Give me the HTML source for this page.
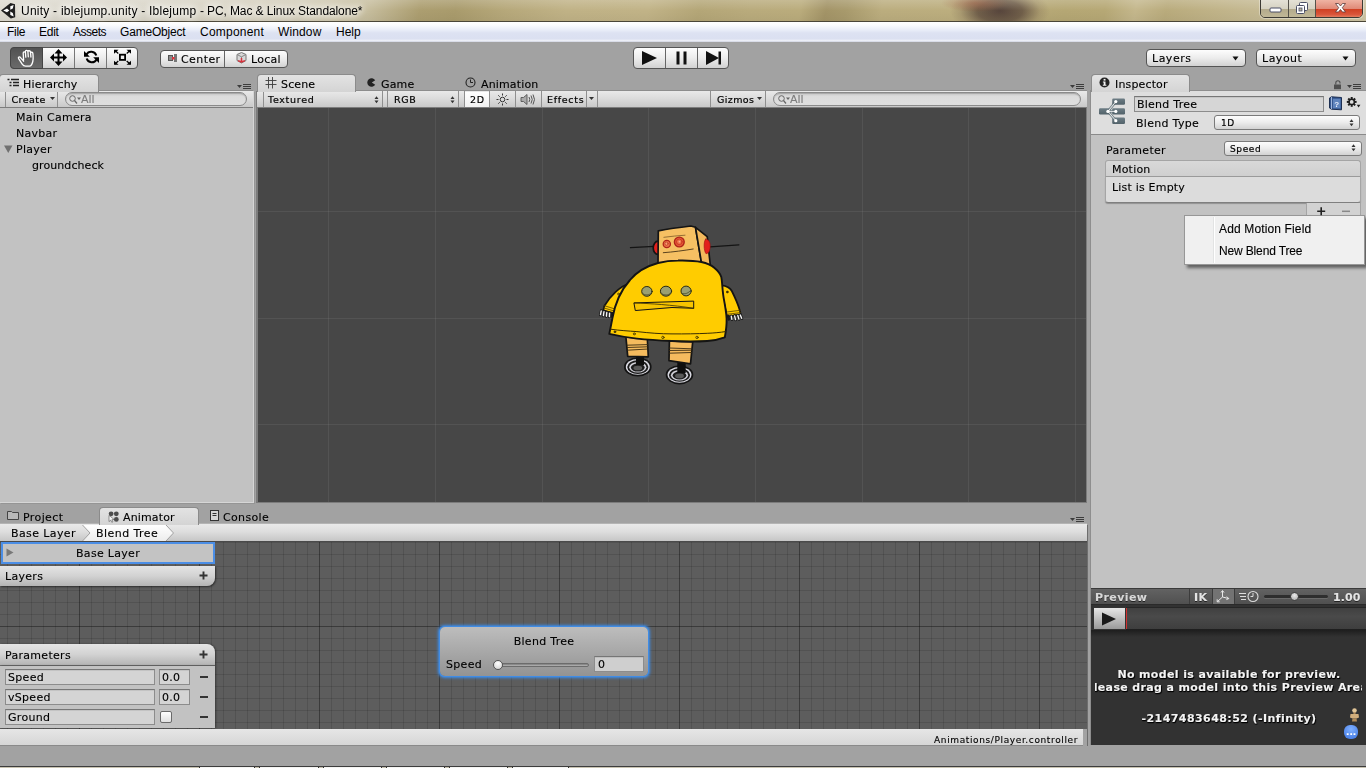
<!DOCTYPE html>
<html>
<head>
<meta charset="utf-8">
<title>Unity - iblejump.unity</title>
<style>
*{box-sizing:border-box;margin:0;padding:0}
html,body{width:1366px;height:768px;overflow:hidden}
body{background:#a2a2a2;font-family:"DejaVu Sans","Liberation Sans",sans-serif;font-size:11px;color:#000;position:relative}
.abs{position:absolute}
.t{position:absolute;white-space:nowrap;line-height:14px;margin-top:1px;z-index:4}
/* title bar */
#title{left:0;top:0;width:1366px;height:22px;border-bottom:1px solid #4a4638;background:
radial-gradient(ellipse 34px 9px at 975px 3px,rgba(150,80,50,.6),rgba(150,90,60,0) 100%),
radial-gradient(ellipse 50px 24px at 1000px 11px,rgba(84,66,58,.97),rgba(100,82,66,.85) 45%,rgba(140,122,92,.35) 80%,rgba(160,145,105,0) 100%),
linear-gradient(100deg,#dddad0 0px,#d9d5c8 150px,#d2ccb8 290px,#c6bd9d 365px,#ac9e70 415px,#a99b6c 450px,#b6a87a 500px,#c0b286 560px,#c1b387 640px,#b4a677 690px,#b9ab7c 740px,#baac7c 790px,#a39467 815px,#a89a6c 835px,#bbad7e 870px,#bcae7e 950px,#b5a774 1050px,#b6a875 1090px,#c4b78c 1120px,#b9ab7c 1150px,#c0b388 1200px,#c9bf9c 1280px,#cfc6a6 1366px)}
#title .tt{left:21px;top:3px;font:12px "Liberation Sans",sans-serif;letter-spacing:.08px;color:#000;line-height:15px;text-shadow:0 0 6px #fff,0 0 8px #fff,0 0 10px rgba(255,255,255,.9)}
#menu{left:0;top:22px;width:1366px;height:20px;background:linear-gradient(#ffffff 0,#fbfcfe 15%,#e9edf8 40%,#dde2f2 55%,#dbe0f1 85%,#eef0f8 92%,#cfd3e0 100%)}
#menu span{position:absolute;top:3px;font:12px "Liberation Sans",sans-serif;line-height:15px}
/* generic unity */
.panelbg{background:#c2c2c2}
.tab{position:absolute;height:18px;z-index:2;background:linear-gradient(#e3e3e3,#d4d4d4);border:1px solid #8b8b8b;border-bottom:none;border-radius:4px 4px 0 0}
.tbar{position:absolute;height:17px;background:linear-gradient(#e9e9e9 0,#dcdcdc 45%,#c9c9c9 100%);border-top:1px solid #8d8d8d;border-bottom:1px solid #7d7d7d}
.btn{position:absolute;background:linear-gradient(#fdfdfd 0,#ececec 50%,#d2d2d2 100%);border:1px solid #555;border-radius:4px}

.itab{z-index:3;position:absolute;top:78px;font-size:11px;line-height:14px;white-space:nowrap;letter-spacing:.15px}
.dd{position:absolute;top:0;height:15px;border-left:1px solid #8a8a8a;border-right:1px solid #f2f2f2}
.sep{position:absolute;top:-1px;width:1px;height:16px;background:#8f8f8f}
.search{position:absolute;height:14px;border:1px solid #8a8a8a;border-radius:7px;background:linear-gradient(#c9c9c9,#dcdcdc 30%,#dedede);box-shadow:inset 0 1px 1px rgba(0,0,0,.18)}
.pmenu{position:absolute;width:14px;height:7px}
.fld{position:absolute;background:#d4d4d4;border:1px solid #8c8c8c;border-top-color:#767676;box-shadow:inset 0 1px 0 rgba(0,0,0,.08)}
svg.abs{z-index:3}
</style>
</head>
<body>
<!-- TITLE BAR -->
<div id="title" class="abs">
  <div class="abs" style="left:0;top:0;width:1366px;height:21px;background:linear-gradient(rgba(255,255,255,.18),rgba(255,255,255,0) 50%,rgba(0,0,0,.04))"></div>
  <svg class="abs" style="left:0;top:2px" width="17" height="18" viewBox="0 0 17 18">
    <path d="M1 8.500 L10.500 1 L15 2.200 L15.200 15.300 L10.800 16.500 Z" fill="#1e1e1e"/>
    <path d="M3.200 8.500 L7 6.600 L9.300 8.500 L7 10.300 Z M10.300 7.800 L10.300 4.300 L13.600 3 L12.800 6.500 Z M10.300 9.600 L12.800 11 L13.700 14.600 L10.300 13 Z" fill="#fff"/>
  </svg>
  <div class="t tt"><span style="letter-spacing:.24px">Unity - iblejump.unity - Iblejump </span><span style="letter-spacing:-.1px">- PC, Mac &amp; Linux Standalone*</span></div>
  <!-- window buttons -->
  <div class="abs" style="left:1260px;top:-1px;width:103px;height:19px;border:1px solid #3c3a34;border-radius:0 0 5px 5px;overflow:hidden;box-shadow:0 0 0 1px rgba(255,255,255,.35)">
    <div class="abs" style="left:0;top:0;width:28px;height:18px;background:linear-gradient(#e4e1d6 0,#d6d2c2 48%,#b3aa8c 50%,#c2b998 100%);border-right:1px solid #55524a"></div>
    <div class="abs" style="left:28px;top:0;width:27px;height:18px;background:linear-gradient(#e4e1d6 0,#d6d2c2 48%,#b3aa8c 50%,#c2b998 100%);border-right:1px solid #55524a"></div>
    <div class="abs" style="left:55px;top:0;width:48px;height:18px;background:linear-gradient(#efb3a3 0,#e08a78 48%,#cf3f22 50%,#d9553a 80%,#e88a6a 100%)"></div>
    <svg class="abs" style="left:0;top:-1px" width="103" height="18" viewBox="0 0 103 18">
      <rect x="9" y="9" width="11" height="4" rx="1" fill="#fff" stroke="#4a4e66" stroke-width="1"/>
      <rect x="38.500" y="3.500" width="8" height="8" rx="1" fill="#fff" stroke="#4a4e66" stroke-width="1"/>
      <rect x="35.500" y="6.500" width="8" height="8" rx="1" fill="#fff" stroke="#4a4e66" stroke-width="1"/>
      <rect x="38" y="9" width="3" height="3" fill="#b8b29a" stroke="#4a4e66" stroke-width=".8"/>
      <path d="M74.500 4.500 L77.500 4.500 L79.500 7 L81.500 4.500 L84.500 4.500 L81.300 8.700 L84.500 13 L81.500 13 L79.500 10.500 L77.500 13 L74.500 13 L77.700 8.700 Z" fill="#fff" stroke="#5a3a3a" stroke-width=".8"/>
    </svg>
  </div>
</div>
<!-- MENU -->
<div id="menu" class="abs">
  <span style="left:7px;letter-spacing:-.3px">File</span><span style="left:39px;letter-spacing:-.25px">Edit</span><span style="left:73px;letter-spacing:-.5px">Assets</span><span style="left:120px;letter-spacing:-.19px">GameObject</span><span style="left:200px;letter-spacing:.22px">Component</span><span style="left:278px;letter-spacing:.13px">Window</span><span style="left:336px">Help</span>
</div>
<div id="u" class="abs" style="left:0;top:0;width:1366px;height:768px;will-change:transform;-webkit-text-stroke-width:.12px">
<!-- MAIN TOOLBAR -->
<div class="abs" id="tools" style="left:10px;top:47px;width:128px;height:22px">
  <div class="btn" style="left:0;top:0;width:128px;height:22px"></div>
  <div class="abs" style="left:0;top:0;width:33px;height:22px;border:1px solid #444;border-radius:4px 0 0 4px;background:linear-gradient(#525252 0,#5e5e5e 50%,#6a6a6a 100%)"></div>
  <div class="abs" style="left:64px;top:1px;width:1px;height:20px;background:#777"></div>
  <div class="abs" style="left:96px;top:1px;width:1px;height:20px;background:#777"></div>
  <svg class="abs" style="left:0;top:0" width="128" height="22" viewBox="0 0 128 22">
    <!-- hand -->
    <path d="M13.600 12.800 L13.200 6.200 C13.100 4.500 15.300 4.300 15.500 5.900 L15.800 10.200 M15.500 5.900 L15.400 4.800 C15.300 3.100 17.700 2.900 17.900 4.600 L18.300 9.800 M17.900 4.600 C18 3.400 20.300 3.400 20.500 5 L20.900 10 M20.500 6 C20.700 4.800 22.800 5 22.900 6.500 L23.100 9 C23.200 11 23.300 12.500 22.800 14.500 C22.300 16.500 21.300 19 19.500 19.200 L15.500 19.200 C14 19.200 13 18.400 12.200 17.200 L8.600 11.600 C7.900 10.400 9.400 9.300 10.300 10.300 L13.600 14.200" fill="none" stroke="#fff" stroke-width="1.300" stroke-linejoin="round" stroke-linecap="round"/>
    <!-- move -->
    <path d="M48.500 2 L52.500 6.500 L49.500 6.500 L49.500 9.500 L53 9.500 L53 6.500 L57 10.500 L53 14.500 L53 11.500 L49.500 11.500 L49.500 14.500 L52.500 14.500 L48.500 19 L44.500 14.500 L47.500 14.500 L47.500 11.500 L44 11.500 L44 14.500 L40 10.500 L44 6.500 L44 9.500 L47.500 9.500 L47.500 6.500 L44.500 6.500 Z" fill="#000"/>
    <!-- rotate -->
    <g fill="none" stroke="#000" stroke-width="2">
      <path d="M76.500 7.500 A5.300 5.300 0 0 1 86.300 8.500"/>
      <path d="M86.500 12.500 A5.300 5.300 0 0 1 76.700 11.500"/>
    </g>
    <path d="M74 4 L74 9.800 L79.800 9.800 Z" fill="#000"/>
    <path d="M89 16 L89 10.200 L83.200 10.200 Z" fill="#000"/>
    <!-- scale -->
    <g fill="none" stroke="#000" stroke-width="1.300">
      <rect x="109.900" y="7.700" width="5.200" height="5.200" stroke-width="1.800"/>
      <path d="M108.300 6.500 L105 3.500 M116.700 6.500 L120 3.500 M108.300 14 L105 17 M116.700 14 L120 17"/>
    </g>
    <g fill="#000">
      <path d="M104 2.700 L108.500 2.700 L104 6.800 Z"/><path d="M121 2.700 L116.500 2.700 L121 6.800 Z"/>
      <path d="M104 17.800 L108.500 17.800 L104 13.700 Z"/><path d="M121 17.800 L116.500 17.800 L121 13.700 Z"/>
    </g>
  </svg>
</div>
<!-- center/local -->
<div class="btn" style="left:160px;top:50px;width:128px;height:18px"></div>
<div class="abs" style="left:224px;top:51px;width:1px;height:16px;background:#666"></div>
<svg class="abs" style="left:160px;top:50px" width="128" height="18" viewBox="0 0 128 18">
  <rect x="8.5" y="5.500" width="4" height="5" fill="#8a8a8a" stroke="#555" stroke-width="1"/>
  <rect x="14" y="4" width="3" height="8" fill="#777"/>
  <rect x="12" y="7" width="2.5" height="2.500" fill="#e0323c"/>
  <!-- cube -->
  <path d="M81.500 2.500 L86 4.500 L86 10.500 L81.500 13 L77 10.500 L77 4.500 Z" fill="#d8d8d8" stroke="#777" stroke-width="1"/>
  <path d="M77 4.500 L81.500 6.800 L86 4.500 M81.500 6.800 L81.500 13" fill="none" stroke="#888" stroke-width="1"/>
  <path d="M81.500 8 L81.500 12 M78 10.600 L81.500 12 L85 10.600" stroke="#d8323c" stroke-width="1.500" fill="none"/>
</svg>
<div class="t" style="left:181px;top:52px;font-size:11px;letter-spacing:.42px">Center</div>
<div class="t" style="left:251px;top:52px;font-size:11px;letter-spacing:.25px">Local</div>
<!-- play controls -->
<div class="btn" style="left:633px;top:47px;width:96px;height:22px"></div>
<div class="abs" style="left:665px;top:48px;width:1px;height:20px;background:#666"></div>
<div class="abs" style="left:697px;top:48px;width:1px;height:20px;background:#666"></div>
<svg class="abs" style="left:633px;top:47px" width="96" height="22" viewBox="0 0 96 22">
  <path d="M9 4 L24 11 L9 18 Z" fill="#111"/>
  <rect x="43.500" y="4.500" width="3" height="13" fill="#111"/><rect x="50.500" y="4.500" width="3" height="13" fill="#111"/>
  <path d="M73 4 L86 11 L73 18 Z" fill="#111"/><rect x="85.500" y="4.500" width="2.500" height="13" fill="#111"/>
</svg>
<!-- layers / layout -->
<div class="btn" style="left:1146px;top:49px;width:100px;height:18px"></div>
<div class="btn" style="left:1256px;top:49px;width:100px;height:18px"></div>
<div class="t" style="left:1152px;top:51px;font-size:11px;letter-spacing:.5px">Layers</div>
<div class="t" style="left:1262px;top:51px;font-size:11px;letter-spacing:.5px">Layout</div>
<svg class="abs" style="left:1232px;top:56px" width="8" height="5"><path d="M0.500 0.500 L6.500 0.500 L3.500 4.500 Z" fill="#111"/></svg>
<svg class="abs" style="left:1342px;top:56px" width="8" height="5"><path d="M0.500 0.500 L6.500 0.500 L3.500 4.500 Z" fill="#111"/></svg>

<!-- HIERARCHY -->
<div class="abs" style="left:0;top:91px;width:254px;height:412px;background:#c2c2c2;border-right:1px solid #d6d6d6;border-bottom:1px solid #d6d6d6;box-shadow:1px 1px 0 #959595"></div>
<div class="tab" style="left:-1px;top:74px;width:100px"></div>
<svg class="abs" style="left:7px;top:78px" width="13" height="11" viewBox="0 0 13 11"><path d="M0.500 1.500 H2.500 M4 1.500 H12 M2.500 4.500 H4.500 M6 4.500 H12 M2.500 7.500 H4.500 M6 7.500 H12" stroke="#222" stroke-width="1.300"/></svg>
<div class="itab" style="left:23px">Hierarchy</div>
<svg class="pmenu" style="left:237px;top:83px" width="14" height="7" viewBox="0 0 14 7"><path d="M0 2 L5 2 L2.500 5 Z" fill="#3c3c3c"/><path d="M6 1.500 H14 M6 3.500 H14 M6 5.500 H14" stroke="#3c3c3c" stroke-width="1"/></svg>
<div class="tbar" style="left:0;top:90px;width:253px;height:18px"></div>
<div class="abs" style="left:0;top:92px;width:253px;height:15px">
  <div class="sep" style="left:5px"></div><div class="sep" style="left:57px"></div>
  <div class="t" style="left:11.500px;top:0;font-size:9.500px;letter-spacing:.45px;line-height:13px;-webkit-text-stroke-width:.2px">Create</div>
  <svg class="abs" style="left:50px;top:5px" width="6" height="4"><path d="M0 0 H5 L2.500 3 Z" fill="#333"/></svg>
  <div class="search" style="left:65px;top:0;width:182px"></div>
  <svg class="abs" style="left:68px;top:2px" width="14" height="11" viewBox="0 0 14 11"><circle cx="4.500" cy="4.500" r="2.800" fill="none" stroke="#666" stroke-width="1"/><path d="M6.500 6.500 L9 9.500" stroke="#666" stroke-width="1.200"/><path d="M9 3.500 H13 L11 6 Z" fill="#666"/></svg>
  <div class="t" style="left:81px;top:0;font-size:11px;color:#7c7c7c;line-height:13px">All</div>
</div>
<div class="t" style="left:16px;top:110px;letter-spacing:.25px">Main Camera</div>
<div class="t" style="left:16px;top:126px;letter-spacing:.25px">Navbar</div>
<div class="t" style="left:16px;top:142px;letter-spacing:.25px">Player</div>
<div class="t" style="left:32px;top:158px;letter-spacing:.08px">groundcheck</div>
<svg class="abs" style="left:4px;top:145px" width="9" height="9"><path d="M0 0.500 H8.500 L4.250 8 Z" fill="#707070"/></svg>

<!-- SCENE -->
<div class="abs" style="left:256px;top:91px;width:831px;height:412px;background:#7c7c7c"></div>
<div class="tab" style="left:257px;top:74px;width:99px"></div>
<svg class="abs" style="left:265px;top:77px" width="12" height="12" viewBox="0 0 12 12"><path d="M3.500 0 V11.500 M7.500 0 V11.500 M0.500 3.500 H11.500 M0.500 7.500 H11.500" stroke="#3c3c3c" stroke-width=".9"/></svg>
<div class="itab" style="left:281px">Scene</div>
<svg class="abs" style="left:367px;top:78px" width="9" height="9" viewBox="0 0 9 9"><path d="M8.200 2.200 A4.300 4.300 0 1 0 8.200 6.800 L4.800 4.500 Z" fill="#222"/></svg>
<div class="itab" style="left:381px">Game</div>
<svg class="abs" style="left:465px;top:77px" width="11" height="11" viewBox="0 0 11 11"><circle cx="5.500" cy="5.500" r="4.500" fill="none" stroke="#222" stroke-width="1.100"/><path d="M5.500 2.500 V5.500 H8" stroke="#222" stroke-width="1" fill="none"/></svg>
<div class="itab" style="left:481px">Animation</div>
<svg class="pmenu" style="left:1070px;top:83px" width="14" height="7" viewBox="0 0 14 7"><path d="M0 2 L5 2 L2.500 5 Z" fill="#3c3c3c"/><path d="M6 1.500 H14 M6 3.500 H14 M6 5.500 H14" stroke="#3c3c3c" stroke-width="1"/></svg>
<div class="tbar" style="left:257px;top:90px;width:830px;height:18px"></div>
<div class="abs" id="stb" style="left:257px;top:92px;width:831px;height:15px;font-size:10px">
  <div class="sep" style="left:6px"></div>
  <div class="t" style="left:11px;top:0;font-size:9.500px;letter-spacing:.7px;line-height:13px;-webkit-text-stroke-width:.2px">Textured</div>
  <svg class="abs" style="left:117px;top:4px" width="5" height="8"><path d="M0.500 3 H4.500 L2.500 0.300 Z M0.500 4.500 H4.500 L2.500 7.200 Z" fill="#333"/></svg>
  <div class="sep" style="left:125px"></div><div class="sep" style="left:130px"></div>
  <div class="t" style="left:137px;top:0;font-size:9.500px;letter-spacing:.7px;line-height:13px;-webkit-text-stroke-width:.2px">RGB</div>
  <svg class="abs" style="left:193px;top:4px" width="5" height="8"><path d="M0.500 3 H4.500 L2.500 0.300 Z M0.500 4.500 H4.500 L2.500 7.200 Z" fill="#333"/></svg>
  <div class="sep" style="left:201px"></div><div class="sep" style="left:207px"></div>
  <div class="abs" style="left:208px;top:0;width:24px;height:15px;background:linear-gradient(#fff,#f2f2f2)"></div>
  <div class="t" style="left:213px;top:0;font-size:9.500px;letter-spacing:.7px;line-height:13px;-webkit-text-stroke-width:.2px">2D</div>
  <div class="sep" style="left:232px"></div>
  <svg class="abs" style="left:239px;top:1px" width="13" height="13" viewBox="0 0 13 13"><circle cx="6.500" cy="6.500" r="2.300" fill="none" stroke="#333" stroke-width="1"/><path d="M6.500 0.500 V2.500 M6.500 10.500 V12.500 M0.500 6.500 H2.500 M10.500 6.500 H12.500 M2.300 2.300 L3.700 3.700 M9.300 9.300 L10.700 10.700 M2.300 10.700 L3.700 9.300 M9.300 3.700 L10.700 2.300" stroke="#333" stroke-width="1"/></svg>
  <div class="sep" style="left:258px"></div>
  <svg class="abs" style="left:263px;top:1px" width="16" height="13" viewBox="0 0 16 13"><path d="M1 4.500 H3.500 L7 1.500 V11.500 L3.500 8.500 H1 Z" fill="#aaa" stroke="#555" stroke-width=".9"/><path d="M9 4 Q10.500 6.500 9 9 M11 2.500 Q13.500 6.500 11 10.500 M13 1.500 Q16 6.500 13 11.500" fill="none" stroke="#555" stroke-width="1"/></svg>
  <div class="sep" style="left:284px"></div>
  <div class="t" style="left:290px;top:0;font-size:9.500px;letter-spacing:.7px;line-height:13px;-webkit-text-stroke-width:.2px">Effects</div>
  <div class="sep" style="left:329px"></div>
  <svg class="abs" style="left:332px;top:5px" width="6" height="4"><path d="M0 0 H5 L2.500 3 Z" fill="#333"/></svg>
  <div class="sep" style="left:340px"></div>
  <div class="sep" style="left:453px"></div>
  <div class="t" style="left:460px;top:0;font-size:9.500px;letter-spacing:.4px;line-height:13px;-webkit-text-stroke-width:.2px">Gizmos</div>
  <svg class="abs" style="left:500px;top:5px" width="6" height="4"><path d="M0 0 H5 L2.500 3 Z" fill="#333"/></svg>
  <div class="sep" style="left:508px"></div>
  <div class="search" style="left:516px;top:0;width:308px"></div>
  <svg class="abs" style="left:520px;top:2px" width="14" height="11" viewBox="0 0 14 11"><circle cx="4.500" cy="4.500" r="2.800" fill="none" stroke="#666" stroke-width="1"/><path d="M6.500 6.500 L9 9.500" stroke="#666" stroke-width="1.200"/><path d="M9 3.500 H13 L11 6 Z" fill="#666"/></svg>
  <div class="t" style="left:533px;top:0;font-size:11px;color:#7c7c7c;line-height:13px">All</div>
</div>
<div class="abs" id="sv" style="left:258px;top:108px;width:828px;height:394px;background:#474747;overflow:hidden">
<svg class="abs" style="left:0;top:0" width="829" height="394" viewBox="258 108 829 394">
<g stroke="#141414" stroke-width="1.700" stroke-linejoin="round" stroke-linecap="round">
  <!-- feet -->
  <ellipse cx="637.8" cy="366.9" rx="13.800" ry="9.600" fill="#141414" stroke="none"/>
  <ellipse cx="637.8" cy="366.9" rx="12" ry="7.900" fill="#dcdce4" stroke="none"/>
  <ellipse cx="637.8" cy="367.100" rx="10.600" ry="6.800" fill="#1c1c1c" stroke="none"/>
  <ellipse cx="637.8" cy="367.300" rx="8.600" ry="5.200" fill="#d4d4dc" stroke="none"/>
  <ellipse cx="637.8" cy="367.600" rx="6.900" ry="4" fill="#1c1c1c" stroke="none"/>
  <ellipse cx="637.8" cy="368.000" rx="4.400" ry="2.300" fill="#585858" stroke="none"/>
  <rect x="636" y="355" width="8" height="10" fill="#0e0e0e" stroke="none"/>
  <ellipse cx="679.5" cy="374.8" rx="13.800" ry="9.600" fill="#141414" stroke="none"/>
  <ellipse cx="679.5" cy="374.8" rx="12" ry="7.900" fill="#dcdce4" stroke="none"/>
  <ellipse cx="679.5" cy="375.000" rx="10.600" ry="6.800" fill="#1c1c1c" stroke="none"/>
  <ellipse cx="679.5" cy="375.200" rx="8.600" ry="5.200" fill="#d4d4dc" stroke="none"/>
  <ellipse cx="679.5" cy="375.500" rx="6.900" ry="4" fill="#1c1c1c" stroke="none"/>
  <ellipse cx="679.5" cy="375.900" rx="4.400" ry="2.300" fill="#585858" stroke="none"/>
  <rect x="677.300" y="362" width="8.400" height="11" fill="#0e0e0e" stroke="none"/>
  <!-- legs -->
  <path d="M625.900 337 L647.400 339 L648.300 356.800 L627.700 356.400 Z" fill="#f5bb5e"/>
  <path d="M627 345.200 L647.800 344.600 M627.300 347.500 L647.900 346.800 M627.500 350.200 L648 349" fill="none" stroke-width=".9" stroke="#3a2a10"/>
  <path d="M669.400 341 L692.700 342 L690.500 363.800 L669 360.700 Z" fill="#f5bb5e"/>
  <path d="M669.300 348 L692 348.800 M669.300 350.500 L691.800 350.200 M669.200 353.200 L691.500 352.500" fill="none" stroke-width=".9" stroke="#3a2a10"/>
  <!-- arms -->
  <path d="M629 283.500 C620 286.500 610 296 604.300 306 L603.300 310.200 L613.500 313.200 L622 300 Z" fill="#ffcc00"/>
  <path d="M604.600 305.800 L615 309 M604 308 L614.200 311" fill="none" stroke-width=".8" stroke="#5a4500"/>
  <path d="M601.200 310.500 L600.300 315 M604 311.200 L603.300 316 M606.800 312 L606.300 316.600 M609.600 312.600 L609.300 317 M612 313 L612 316.500" stroke="#1a1a1a" stroke-width="2.600" fill="none"/>
  <path d="M601.200 311 L600.500 314.600 M604 311.700 L603.400 315.600 M606.800 312.500 L606.400 316.200 M609.600 313.100 L609.400 316.600" stroke="#f4f4f4" stroke-width="1.400" fill="none"/>
  <path d="M721.500 285.300 C727 285.800 730.300 288 731.800 291 C735.300 298 738.300 305 740 311 L740.700 314.500 L727 316.500 L723 298 Z" fill="#ffcc00"/>
  <path d="M727 312 L740.200 310.300 M727.200 314.300 L740.500 312.600" fill="none" stroke-width=".8" stroke="#5a4500"/>
  <path d="M728.300 316 L728.800 319.500 M731.300 315.800 L732 319.800 M734.600 315.400 L735.600 320 M737.800 315 L739 319.500 M740.300 314.600 L742 318.600" stroke="#1a1a1a" stroke-width="2.600" fill="none"/>
  <path d="M731.300 316.300 L731.900 319.400 M734.600 315.900 L735.500 319.600 M737.800 315.500 L738.900 319.100 M740.300 315.100 L741.700 318.300" stroke="#f4f4f4" stroke-width="1.400" fill="none"/>
  <!-- antennas & ears -->
  <path d="M630.400 247.600 L654 246.400 M710 246.800 L738.900 244.900" fill="none" stroke-width="1.200"/>
  <ellipse cx="658" cy="247.800" rx="4.800" ry="6.600" fill="#e2201c"/>
  <!-- head -->
  <path d="M658.300 230.800 C668 229 680 227.300 690.800 226 L695.500 227.300 L701.500 263 L658 265 Z" fill="#f6c063"/>
  <path d="M695.500 227.300 L707.200 236.700 L710.400 266 L701.500 263 Z" fill="#f3b95c"/>
  <path d="M705.500 239.200 C709.500 239.500 710.300 243 710.200 246.500 C710.100 250 709 253.500 706 253.700 C703.800 251 703.300 242 705.500 239.200 Z" fill="#e2201c" stroke="#a01010" stroke-width=".6"/>
  <circle cx="666.800" cy="244" r="3.600" fill="#ec7248" stroke="#b0241a" stroke-width="1.300"/>
  <circle cx="666.500" cy="243.700" r="1.600" fill="#f5a070" stroke="#c23a24" stroke-width=".8"/>
  <circle cx="679.300" cy="242" r="4.900" fill="#e65a36" stroke="#b0241a" stroke-width="1.400"/>
  <circle cx="679.300" cy="241.800" r="2.800" fill="#ef7448" stroke="#c23020" stroke-width=".8"/>
  <circle cx="679.500" cy="241.600" r=".9" fill="#f8b090" stroke="none"/>
  <path d="M663.900 237.300 C671 236.300 678 235.700 685 235.200" fill="none" stroke="#6a4a20" stroke-width=".7"/>
  <path d="M663.300 252.700 C673 252 684 250.500 693.200 249" fill="none" stroke="#4a3416" stroke-width=".9"/>
  <!-- body -->
  <path d="M609.300 333.900 L612.300 318.700 C615 303 622 289 630 280 C637 271.500 647 266 658 263 C665 261.200 671 260.500 678 260.500 C686 260.300 694 260.500 701.400 262 C707 263.300 711 265 714.300 267.800 C718 271 720.500 274 721.300 277.100 C722.300 282 722.300 290 723.600 297.600 C725 305 726.300 312 726.600 318.700 C726.800 325 726 331 724.800 337.400 C719 339.500 713 340.700 707.200 341 C695 341.800 684 341.600 672 341 C660 340.500 648 339.800 636.900 338.600 C627 337.500 618 336 609.300 333.900 Z" fill="#ffcc00" stroke-width="1.900"/>
  <path d="M610.500 329.200 C620 330.500 628 331 636.900 331.600 C650 333 660 333.900 672 333.900 C685 334 697 333.800 707.200 333.300 C714 333 720 332.500 725.400 331.600" fill="none" stroke-width="1" stroke="#3a2e00"/>
  <g fill="none" stroke="#3a2e00" stroke-width=".8"><circle cx="614.900" cy="331.800" r=".9" fill="#3a2e00"/><circle cx="634.300" cy="333.900" r="1"/><circle cx="662.900" cy="337.400" r="1.200"/><circle cx="697" cy="337.400" r="1.200"/><circle cx="618.500" cy="294" r=".9"/><circle cx="727.300" cy="292" r=".9" fill="#3a2e00"/></g>
  <!-- buttons -->
  <g stroke="#2c2c10" stroke-width="1">
    <ellipse cx="646.900" cy="291.400" rx="5.200" ry="4.900" fill="#9aa072"/>
    <ellipse cx="666" cy="291.200" rx="5.600" ry="5" fill="#9aa072"/>
    <ellipse cx="686.100" cy="291" rx="5.100" ry="4.900" fill="#9aa072"/>
  </g>
  <path d="M642.800 293.400 C645 295.800 649 295.600 651.300 293 M661.600 293.400 C664 295.800 668.500 295.600 670.600 293 M682.500 293.600 C684.500 294.500 688.500 293.200 690.300 290.800" fill="none" stroke="#4a4e28" stroke-width=".9"/>
  <!-- mouth slot -->
  <path d="M634.300 302.900 L693.700 301.100 L693.700 308.300 L672 307.500 L635.700 310.500 Z" fill="#f7c400" stroke-width="1"/>
  <path d="M634.300 302.900 C650 303.600 672 304.800 693.700 308.300" fill="none" stroke-width=".8" stroke="#3a2e00"/>
</g>
</svg>

<div class="abs" style="left:70px;top:0;width:1px;height:394px;background:rgba(140,140,140,.18)"></div><div class="abs" style="left:177px;top:0;width:1px;height:394px;background:rgba(140,140,140,.18)"></div><div class="abs" style="left:284px;top:0;width:1px;height:394px;background:rgba(140,140,140,.18)"></div><div class="abs" style="left:390px;top:0;width:1px;height:394px;background:rgba(140,140,140,.18)"></div><div class="abs" style="left:497px;top:0;width:1px;height:394px;background:rgba(140,140,140,.18)"></div><div class="abs" style="left:604px;top:0;width:1px;height:394px;background:rgba(140,140,140,.18)"></div><div class="abs" style="left:710px;top:0;width:1px;height:394px;background:rgba(140,140,140,.18)"></div><div class="abs" style="left:817px;top:0;width:1px;height:394px;background:rgba(140,140,140,.18)"></div><div class="abs" style="left:0;top:103px;width:829px;height:1px;background:rgba(140,140,140,.18)"></div><div class="abs" style="left:0;top:210px;width:829px;height:1px;background:rgba(140,140,140,.18)"></div><div class="abs" style="left:0;top:316px;width:829px;height:1px;background:rgba(140,140,140,.18)"></div>

</div>

<!-- INSPECTOR -->
<div class="abs" style="left:1090px;top:90px;width:276px;height:655px;background:#c2c2c2;border-left:1px solid #8e8e8e;border-top:1px solid #8e8e8e"></div>
<div class="tab" style="left:1091px;top:74px;width:99px"></div>
<svg class="abs" style="left:1099px;top:77px" width="11" height="11" viewBox="0 0 11 11"><circle cx="5.500" cy="5.500" r="5" fill="#222"/><path d="M3.900 4.400 H6.500 V7.800 H7.400 V8.800 H3.800 V7.800 H4.700 V5.400 H3.900 Z" fill="#f2f2f2"/><rect x="4.600" y="1.900" width="1.900" height="1.700" fill="#f2f2f2"/></svg>
<div class="itab" style="left:1115px">Inspector</div>
<svg class="abs" style="left:1333px;top:79px" width="9" height="11" viewBox="0 0 9 11"><rect x="1" y="5.500" width="7" height="4.700" fill="#505050"/><path d="M2.800 5.500 V3.800 A2.100 2.100 0 0 1 7 3.800 V4.500" fill="none" stroke="#505050" stroke-width="1.100"/></svg>
<svg class="pmenu" style="left:1347px;top:83px" width="14" height="7" viewBox="0 0 14 7"><path d="M0 2 L5 2 L2.500 5 Z" fill="#3c3c3c"/><path d="M6 1.500 H14 M6 3.500 H14 M6 5.500 H14" stroke="#3c3c3c" stroke-width="1"/></svg>
<!-- header -->
<div class="abs" style="left:1091px;top:91px;width:275px;height:44px;background:#dedede;border-bottom:1px solid #8a8a8a"></div>
<svg class="abs" style="left:1098px;top:98px" width="28" height="27" viewBox="0 0 28 27">
  <defs><linearGradient id="btg" x1="0" y1="0" x2="0" y2="1"><stop offset="0" stop-color="#6d7d85"/><stop offset="1" stop-color="#52626a"/></linearGradient></defs>
  <path d="M10 13.400 L17.800 3.600 M10 13.400 L17.800 13.400 M10 13.400 L17.800 22.700" stroke="#7c898f" stroke-width="2.600" fill="none"/>
  <rect x="1" y="10.300" width="11.500" height="6.200" rx="1.200" fill="url(#btg)"/>
  <rect x="14.200" y="0.600" width="12.800" height="6.200" rx="1.200" fill="url(#btg)"/>
  <rect x="14.200" y="10.300" width="12.800" height="6.200" rx="1.200" fill="url(#btg)"/>
  <rect x="14.200" y="19.600" width="12.800" height="6.400" rx="1.200" fill="url(#btg)"/>
  <path d="M10 13.400 L17.800 3.600 M10 13.400 L17.800 13.400 M10 13.400 L17.800 22.700" stroke="#f4f4f4" stroke-width=".9" fill="none"/>
  <circle cx="10" cy="13.400" r="1.700" fill="#fff"/><circle cx="17.800" cy="3.600" r="1.600" fill="#fff"/><circle cx="17.800" cy="13.400" r="1.600" fill="#fff"/><circle cx="17.800" cy="22.700" r="1.600" fill="#fff"/>
</svg>
<div class="fld" style="left:1134px;top:96px;width:190px;height:16px;background:#d6d6d6"></div>
<div class="t" style="left:1137px;top:97px;letter-spacing:.25px">Blend Tree</div>
<svg class="abs" style="left:1328px;top:96px" width="15" height="15" viewBox="0 0 15 15">
  <path d="M1.500 2 L3.500 0.800 L13.500 1.500 L13.500 13.800 L3.500 13.200 L1.500 12 Z" fill="#34568f" stroke="#1d2f52" stroke-width="1"/>
  <path d="M3.500 1 V13" stroke="#9fb6dc" stroke-width="1"/>
  <rect x="5" y="2.800" width="7.500" height="9.500" fill="#5f84bd"/>
  <text x="8.800" y="10.800" font-size="8" font-family="Liberation Sans, sans-serif" font-weight="bold" fill="#e8eefb" text-anchor="middle">?</text>
</svg>
<svg class="abs" style="left:1346px;top:96px" width="16" height="13" viewBox="0 0 16 13">
  <g transform="translate(5.700 5.900)" fill="#1c1c1c">
    <circle r="3.300"/>
    <g><rect x="-1" y="-4.900" width="2" height="9.800"/><rect x="-1" y="-4.900" width="2" height="9.800" transform="rotate(45)"/><rect x="-1" y="-4.900" width="2" height="9.800" transform="rotate(90)"/><rect x="-1" y="-4.900" width="2" height="9.800" transform="rotate(135)"/></g>
    <circle r="1.900" fill="#dedede"/>
  </g>
  <path d="M10.800 8.700 H14.400 L12.600 11.500 Z" fill="#1c1c1c"/>
</svg>
<div class="t" style="left:1136px;top:116px;letter-spacing:.3px">Blend Type</div>
<div class="btn" style="left:1214px;top:115px;width:146px;height:15px;border-radius:3px;border-color:#7a7a7a"></div>
<div class="t" style="left:1221px;top:115px;font-size:9px;letter-spacing:.6px;-webkit-text-stroke-width:.2px">1D</div>
<svg class="abs" style="left:1349px;top:118.500px" width="5" height="8"><path d="M0.500 3 H4.500 L2.500 0.300 Z M0.500 4.500 H4.500 L2.500 7.200 Z" fill="#333"/></svg>
<div class="t" style="left:1106px;top:143px;letter-spacing:.3px">Parameter</div>
<div class="btn" style="left:1224px;top:141px;width:138px;height:15px;border-radius:3px;border-color:#7a7a7a"></div>
<div class="t" style="left:1230px;top:141px;font-size:9px;letter-spacing:.6px;-webkit-text-stroke-width:.2px">Speed</div>
<svg class="abs" style="left:1351px;top:144px" width="5" height="8"><path d="M0.500 3 H4.500 L2.500 0.300 Z M0.500 4.500 H4.500 L2.500 7.200 Z" fill="#333"/></svg>
<!-- motion list -->
<div class="abs" style="left:1105px;top:160px;width:256px;height:17px;background:linear-gradient(#d9d9d9,#cfcfcf);border:1px solid #a5a5a5;border-bottom-color:#9a9a9a;border-radius:3px 3px 0 0"></div>
<div class="t" style="left:1112px;top:162px;letter-spacing:.2px">Motion</div>
<div class="abs" style="left:1105px;top:177px;width:256px;height:26px;background:#dcdcdc;border:1px solid #a5a5a5;border-top:none;border-bottom-color:#7f7f7f;border-radius:0 0 3px 3px;box-shadow:0 1px 1px rgba(0,0,0,.25)"></div>
<div class="t" style="left:1112px;top:180px;letter-spacing:.2px">List is Empty</div>
<div class="abs" style="left:1306px;top:203px;width:55px;height:14px;background:#d2d2d2;border:1px solid #a5a5a5;border-top:none"></div>
<svg class="abs" style="left:1315px;top:205px" width="40" height="12" viewBox="0 0 40 12"><path d="M6.200 2.300 V10.300 M2.200 6.300 H10.200" stroke="#222" stroke-width="1.600"/><path d="M27 6.300 H35" stroke="#888" stroke-width="1.500"/></svg>
<!-- context menu -->
<div class="abs" style="left:1184px;top:215px;width:181px;height:50px;background:#f0f0f0;border:1px solid #979797;box-shadow:3px 3px 3px rgba(0,0,0,.5)"></div>
<div class="abs" style="left:1213px;top:217px;width:1px;height:46px;background:#e2e3e3;border-right:1px solid #fff;box-sizing:content-box"></div>
<div class="t" style="left:1219px;top:221px;font:12px 'Liberation Sans',sans-serif;line-height:15px;letter-spacing:.14px">Add Motion Field</div>
<div class="t" style="left:1219px;top:243px;font:12px 'Liberation Sans',sans-serif;line-height:15px;letter-spacing:-.15px">New Blend Tree</div>
<!-- preview -->
<div class="abs" style="left:1091px;top:588px;width:275px;height:17px;background:linear-gradient(#626262,#505050);border-top:1px solid #3a3a3a;border-bottom:1px solid #2a2a2a"></div>
<div class="abs" style="left:1091px;top:605px;width:275px;height:140px;background:#323232"></div><div class="abs" style="left:1091px;top:630px;width:275px;height:7px;background:linear-gradient(#1e1e1e,#323232)"></div>
<div class="t" style="left:1095px;top:590px;font-weight:bold;color:#d8d8d8;letter-spacing:.4px;text-shadow:0 1px 0 #222">Preview</div>
<div class="abs" style="left:1189px;top:589px;width:1px;height:15px;background:#3c3c3c"></div>
<div class="t" style="left:1194px;top:590px;font-weight:bold;color:#e4e4e4;letter-spacing:.5px;text-shadow:0 1px 0 #222">IK</div>
<div class="abs" style="left:1212px;top:589px;width:23px;height:15px;background:#737373;border-left:1px solid #3c3c3c;border-right:1px solid #3c3c3c"></div>
<svg class="abs" style="left:1216px;top:590px" width="14" height="13" viewBox="0 0 14 13"><path d="M6.500 1 V7 L12.500 8.500 M6.500 7 L1.500 11.500" stroke="#e8e8e8" stroke-width="1" fill="none"/><path d="M5 2.500 L6.500 0.500 L8 2.500 M10.800 6.600 L12.800 8.600 L10.400 9.600 M1.200 9.300 L1.200 11.800 L3.700 11.800" stroke="#e8e8e8" stroke-width="1" fill="none"/></svg>
<svg class="abs" style="left:1238px;top:590px" width="22" height="13" viewBox="0 0 22 13"><path d="M1 3.500 H8 M2 6.500 H8 M3 9.500 H8" stroke="#ddd" stroke-width="1"/><circle cx="15" cy="6.500" r="5" fill="none" stroke="#ddd" stroke-width="1.100"/><path d="M15 3 V6.500 H12.500" stroke="#ddd" stroke-width="1" fill="none"/></svg>
<div class="abs" style="left:1264px;top:595px;width:64px;height:3px;border-radius:2px;background:#2e2e2e;box-shadow:0 1px 0 #6a6a6a"></div>
<div class="abs" style="left:1290px;top:592px;width:9px;height:9px;border-radius:5px;background:radial-gradient(circle at 50% 35%,#e8e8e8,#a8a8a8);border:1px solid #444"></div>
<div class="t" style="left:1333px;top:590px;font-weight:bold;color:#e4e4e4;letter-spacing:.05px;text-shadow:0 1px 0 #222">1.00</div>
<!-- timeline -->
<div class="abs" style="left:1093px;top:607px;width:273px;height:23px;background:linear-gradient(#404040,#4a4a4a 40%,#3e3e3e);border-top:1px solid #262626;border-bottom:1px solid #1f1f1f"></div>
<div class="abs" style="left:1093px;top:607px;width:33px;height:23px;background:linear-gradient(#e6e6e6,#9a9a9a);border:1px solid #333"></div>
<svg class="abs" style="left:1101px;top:612px" width="16" height="14"><path d="M1 0.500 L15 7 L1 13.500 Z" fill="#1a1a1a"/></svg>
<div class="abs" style="left:1126px;top:608px;width:1px;height:21px;background:#d03030"></div>
<div class="abs" style="left:1095px;top:665px;width:267px;height:60px;overflow:hidden">
  <div class="t" style="left:-66px;width:400px;text-align:center;top:2px;font-weight:bold;color:#f4f4f4;letter-spacing:.36px;text-shadow:0 1px 1px #000,1px 1px 1px #000">No model is available for preview.</div>
  <div class="t" style="left:-66px;width:400px;text-align:center;top:15px;font-weight:bold;color:#f4f4f4;letter-spacing:.36px;text-shadow:0 1px 1px #000,1px 1px 1px #000">Please drag a model into this Preview Area.</div>
  <div class="t" style="left:-66px;width:400px;text-align:center;top:46px;font-weight:bold;color:#f4f4f4;letter-spacing:.43px;text-shadow:0 1px 1px #000,1px 1px 1px #000">-2147483648:52 (-Infinity)</div>
</div>
<svg class="abs" style="left:1349px;top:708px" width="11" height="15" viewBox="0 0 11 15"><circle cx="5.500" cy="2.600" r="2.300" fill="#e2c698"/><rect x="4.400" y="4.400" width="2.200" height="1.600" fill="#a88454"/><path d="M1.500 6 H9.500 L10 9.500 L7.500 10.500 H3.500 L1 9.500 Z" fill="#d2ae7c"/><path d="M3.500 10.500 H7.500 L8 13.500 H3 Z" fill="#b08a58"/></svg>
<div class="abs" style="left:1344px;top:725px;width:14px;height:14px;border-radius:6px;background:radial-gradient(circle at 50% 30%,#7fb0ff,#3d74e0);"></div>
<div class="t" style="left:1346px;top:725px;font-size:9px;color:#fff;font-weight:bold;line-height:12px">...</div>

<!-- BOTTOM PANEL -->
<div class="tab" style="left:99px;top:507px;width:100px"></div>
<svg class="abs" style="left:7px;top:510px" width="12" height="10" viewBox="0 0 12 10"><path d="M0.500 9.500 V1.500 H4.500 L5.500 2.500 H11.500 V9.500 Z" fill="#b8b8b8" stroke="#444" stroke-width="1"/></svg>
<div class="itab" style="left:23px;top:511px;letter-spacing:.4px">Project</div>
<svg class="abs" style="left:106px;top:510px" width="13" height="13" viewBox="0 0 13 13"><circle cx="5.100" cy="3.800" r="2.400" fill="#4c4c4c"/><circle cx="10.300" cy="3.800" r="2.400" fill="#4c4c4c"/><circle cx="10.300" cy="9.400" r="2.400" fill="#4c4c4c"/><path d="M3 5.300 L3 11.600 L4.700 10.200 L5.800 12.300 L6.900 11.800 L5.900 9.700 L8 9.400 Z" fill="#f4f4f4" stroke="#555" stroke-width=".6"/></svg>
<div class="itab" style="left:123px;top:511px">Animator</div>
<svg class="abs" style="left:209px;top:510px" width="11" height="11" viewBox="0 0 11 11"><rect x="1.500" y="0.500" width="8" height="10" fill="#d8d8d8" stroke="#333" stroke-width="1"/><path d="M3.500 3.500 H7.500 M3.500 5.500 H7.500" stroke="#333" stroke-width="1"/></svg>
<div class="itab" style="left:223px;top:511px;letter-spacing:.35px">Console</div>
<svg class="pmenu" style="left:1070px;top:516px" width="14" height="7" viewBox="0 0 14 7"><path d="M0 2 L5 2 L2.500 5 Z" fill="#3c3c3c"/><path d="M6 1.500 H14 M6 3.500 H14 M6 5.500 H14" stroke="#3c3c3c" stroke-width="1"/></svg>
<div class="abs" style="left:0;top:523px;width:1087px;height:19px;background:linear-gradient(#e9e9e9 0,#dedede 45%,#c6c6c6 100%);border-top:1px solid #b4b4b4;border-bottom:1px solid #4a4a4a"></div>
<svg class="abs" style="left:0;top:525px" width="180" height="16" viewBox="0 0 180 16">
  <defs><linearGradient id="bcg" x1="0" y1="0" x2="0" y2="1"><stop offset="0" stop-color="#ffffff"/><stop offset="1" stop-color="#ececec"/></linearGradient></defs>
  <path d="M82.500 0 L90 8 L82.500 16 L166 16 L173.500 8 L166 0 Z" fill="url(#bcg)"/>
  <path d="M82.500 0 L90 8 L82.500 16" fill="none" stroke="#a0a0a0" stroke-width="1"/>
  <path d="M166 0 L173.500 8 L166 16" fill="none" stroke="#a0a0a0" stroke-width="1"/>
</svg>
<div class="t" style="left:11px;top:526px;letter-spacing:.4px">Base Layer</div>
<div class="t" style="left:96px;top:526px;letter-spacing:.45px">Blend Tree</div>
<!-- graph -->
<div class="abs" id="graph" style="left:0;top:542px;width:1087px;height:187px;background-color:#5d5d5d;overflow:hidden;
 background-image:linear-gradient(90deg,rgba(0,0,0,.28) 1px,transparent 1px),linear-gradient(rgba(0,0,0,.28) 1px,transparent 1px),linear-gradient(90deg,rgba(0,0,0,.12) 1px,transparent 1px),linear-gradient(rgba(0,0,0,.12) 1px,transparent 1px);
 background-size:120px 120px,120px 120px,12px 12px,12px 12px;background-position:79px 84px,79px 84px,7px 0px,7px 0px"></div>
<div class="abs" style="left:1087px;top:525px;width:1px;height:221px;background:#6e6e6e"></div>
<!-- layers widget -->
<div class="abs" style="left:1px;top:542px;width:214px;height:22px;background:#c3c3c3;border:2px solid #4b8ee6"></div>
<svg class="abs" style="left:6px;top:548px" width="8" height="9"><path d="M0.500 0.500 L7.500 4.500 L0.500 8.500 Z" fill="#787878"/></svg>
<div class="t" style="left:0;top:546px;width:216px;text-align:center;letter-spacing:.3px">Base Layer</div>
<div class="abs" style="left:0;top:566px;width:215px;height:20px;background:linear-gradient(#e4e4e4 0,#d2d2d2 50%,#b4b4b4 100%);border-radius:0 0 8px 0;box-shadow:1px 1px 2px rgba(0,0,0,.5)"></div>
<div class="t" style="left:5px;top:569px;letter-spacing:.3px">Layers</div>
<svg class="abs" style="left:199px;top:571px" width="9" height="9"><path d="M4.500 0.500 V8.500 M0.500 4.500 H8.500" stroke="#333" stroke-width="1.900"/></svg>
<!-- parameters widget -->
<div class="abs" style="left:0;top:644px;width:215px;height:22px;background:linear-gradient(#e4e4e4 0,#d2d2d2 50%,#b4b4b4 100%);border-radius:0 8px 0 0;border-bottom:1px solid #6e6e6e;box-shadow:1px 0 2px rgba(0,0,0,.4)"></div>
<div class="t" style="left:5px;top:648px;letter-spacing:.3px">Parameters</div>
<svg class="abs" style="left:199px;top:650px" width="9" height="9"><path d="M4.500 0.500 V8.500 M0.500 4.500 H8.500" stroke="#333" stroke-width="1.900"/></svg>
<div class="abs" style="left:0;top:666px;width:215px;height:62px;background:#c2c2c2;box-shadow:1px 0 2px rgba(0,0,0,.4)"></div>
<div class="fld" style="left:5px;top:669px;width:150px;height:16px"></div>
<div class="t" style="left:8px;top:670px;letter-spacing:.3px">Speed</div>
<div class="fld" style="left:159px;top:669px;width:31px;height:16px"></div>
<div class="t" style="left:162px;top:670px;letter-spacing:.3px">0.0</div>
<div class="abs" style="left:200px;top:676px;width:8px;height:1px;background:#333;height:1.500px"></div>
<div class="fld" style="left:5px;top:689px;width:150px;height:16px"></div>
<div class="t" style="left:8px;top:690px;letter-spacing:.3px">vSpeed</div>
<div class="fld" style="left:159px;top:689px;width:31px;height:16px"></div>
<div class="t" style="left:162px;top:690px;letter-spacing:.3px">0.0</div>
<div class="abs" style="left:200px;top:696px;width:8px;height:1.500px;background:#333"></div>
<div class="fld" style="left:5px;top:709px;width:150px;height:16px"></div>
<div class="t" style="left:8px;top:710px;letter-spacing:.3px">Ground</div>
<div class="abs" style="left:160px;top:711px;width:12px;height:12px;border:1px solid #6a6a6a;border-radius:2px;background:linear-gradient(#fff,#e0e0e0)"></div>
<div class="abs" style="left:200px;top:716px;width:8px;height:1.500px;background:#333"></div>
<!-- blend tree node -->
<div class="abs" style="left:440px;top:627px;width:208px;height:49px;border-radius:5px;background:linear-gradient(#bdbdbd 0,#a8a8a8 50%,#939393 100%);border:none;box-shadow:0 0 3px 1.500px #3d8be6,0 0 1px 1px #5aa2f0"></div>
<div class="t" style="left:440px;top:634px;width:208px;text-align:center;letter-spacing:.3px">Blend Tree</div>
<div class="t" style="left:446px;top:657px;letter-spacing:.3px">Speed</div>
<div class="abs" style="left:494px;top:663px;width:95px;height:4px;border-radius:2px;background:linear-gradient(#7a7a7a,#b8b8b8);border:1px solid #6c6c6c"></div>
<div class="abs" style="left:493px;top:660px;width:10px;height:10px;border-radius:5px;background:radial-gradient(circle at 50% 30%,#fff,#cfcfcf);border:1px solid #555"></div>
<div class="fld" style="left:594px;top:656px;width:50px;height:16px;background:#cfcfcf"></div>
<div class="t" style="left:598px;top:657px">0</div>
<!-- status bar -->
<div class="abs" style="left:0;top:729px;width:1083px;height:17px;background:linear-gradient(#e6e6e6 0,#d6d6d6 100%);border-bottom:1px solid #8a8a8a"></div>
<div class="t" style="left:784px;width:294px;text-align:right;top:733px;font-size:9px;letter-spacing:.62px;line-height:12px">Animations/Player.controller</div>
<!-- taskbar sliver -->
<div class="abs" style="left:0;top:766px;width:1366px;height:2px;background:#c9c4b2;border-top:1px solid #3c3c3c"></div><div class="abs" style="left:199px;top:767px;width:56px;height:1px;background:#f4f4f2;border-left:1px solid #333;border-right:1px solid #333"></div><div class="abs" style="left:259px;top:767px;width:60px;height:1px;background:#f4f4f2;border-left:1px solid #333;border-right:1px solid #333"></div><div class="abs" style="left:323px;top:767px;width:59px;height:1px;background:#f4f4f2;border-left:1px solid #333;border-right:1px solid #333"></div><div class="abs" style="left:386px;top:767px;width:59px;height:1px;background:#f4f4f2;border-left:1px solid #333;border-right:1px solid #333"></div><div class="abs" style="left:449px;top:767px;width:59px;height:1px;background:#f4f4f2;border-left:1px solid #333;border-right:1px solid #333"></div><div class="abs" style="left:512px;top:767px;width:57px;height:1px;background:#f4f4f2;border-left:1px solid #333;border-right:1px solid #333"></div>

</div>
</body>
</html>
